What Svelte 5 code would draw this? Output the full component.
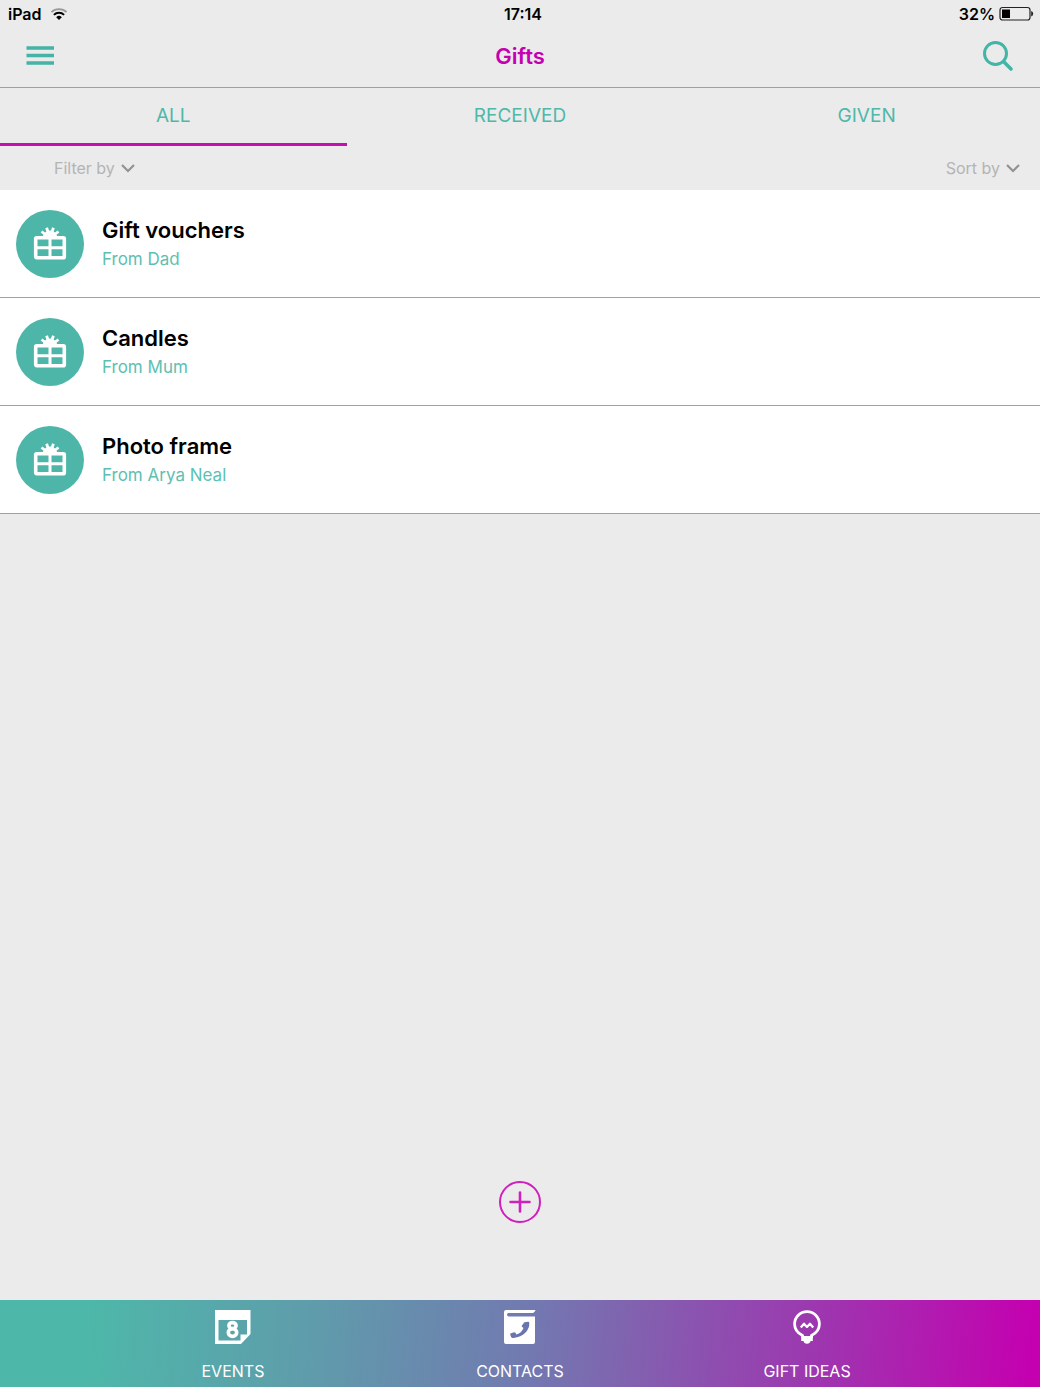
<script>
  const tabs = ['ALL', 'RECEIVED', 'GIVEN'];
  let active = $state('ALL');

  const gifts = [
    { name: 'Gift vouchers', from: 'From Dad' },
    { name: 'Candles', from: 'From Mum' },
    { name: 'Photo frame', from: 'From Arya Neal' }
  ];
</script>

{#snippet chevron()}
  <svg class="chevron" width="14" height="10" viewBox="0 0 14 10" aria-hidden="true">
    <path d="M1 2l6 6 6-6" fill="none" stroke="currentColor" stroke-width="2.2" />
  </svg>
{/snippet}

<div class="screen">
  <div class="status">
    <div class="device">
      <span>iPad</span>
      <svg width="18" height="14" viewBox="0 0 18 14" aria-hidden="true">
        <path d="M1.4 5.2a11 11 0 0 1 15.2 0" fill="none" stroke="#999" stroke-width="1.8" />
        <path d="M3.9 7.9a7.3 7.3 0 0 1 10.2 0" fill="none" stroke="#000" stroke-width="2" />
        <path d="M9 13l-2.8-2.8a4 4 0 0 1 5.6 0z" fill="#000" />
      </svg>
    </div>
    <span class="clock">17:14</span>
    <div class="battery">
      <span>32%</span>
      <svg width="35" height="16" viewBox="0 0 35 16" aria-hidden="true">
        <rect x="1" y="1.5" width="30" height="12.5" rx="2.5" fill="none" stroke="#222" stroke-width="1.2" />
        <rect x="3" y="3.5" width="8" height="8.5" fill="#000" />
        <path d="M32.2 5v5.500q2-.4 2-2.750t-2-2.750z" fill="#222" />
      </svg>
    </div>
  </div>

  <header>
    <button class="menu" aria-label="Menu">
      <svg width="28" height="20" viewBox="0 0 28 20" aria-hidden="true">
        <path d="M0.500 2H28M0.500 9.500H28M0.500 17H28" fill="none" stroke="#43b4a5" stroke-width="3.6" />
      </svg>
    </button>
    <h1>Gifts</h1>
    <button class="search" aria-label="Search">
      <svg width="32" height="32" viewBox="0 0 32 32" aria-hidden="true">
        <circle cx="13.500" cy="13.500" r="11" fill="none" stroke="#43b4a5" stroke-width="3" />
        <path d="M21.500 21.500l7.500 7.500" fill="none" stroke="#43b4a5" stroke-width="3.6" stroke-linecap="round" />
      </svg>
    </button>
  </header>

  <nav class="tabs" aria-label="Gift lists">
    {#each tabs as tab}
      <button class:active={active === tab} onclick={() => (active = tab)}>{tab}</button>
    {/each}
  </nav>

  <div class="tools">
    <button>Filter by {@render chevron()}</button>
    <button>Sort by {@render chevron()}</button>
  </div>

  <ul>
    {#each gifts as gift}
      <li>
        <span class="badge">
          <svg width="34" height="34" viewBox="0 0 34 34" aria-hidden="true">
            <rect x="2.7" y="10.700" width="28.6" height="20" rx="1" fill="none" stroke="#fff" stroke-width="3.6" />
            <path d="M17 11v20M2 20.700h30" stroke="#fff" stroke-width="3" />
            <path d="M17 11L8.500 4.500M17 11L13.600 .8M17 11L20.400 .8M17 11l8.500-6.500" stroke="#fff" stroke-width="2.800" />
            <path d="M10 10a7 6.500 0 0 1 14 0z" fill="#fff" />
          </svg>
        </span>
        <div>
          <h2>{gift.name}</h2>
          <p>{gift.from}</p>
        </div>
      </li>
    {/each}
  </ul>

  <main>
    <button aria-label="Add gift">
      <svg width="44" height="44" viewBox="0 0 44 44" aria-hidden="true">
        <circle cx="22" cy="22" r="20" fill="none" stroke="#cf1fbd" stroke-width="2" />
        <path d="M22 12.500v19M12.500 22h19" fill="none" stroke="#cf1fbd" stroke-width="2.6" stroke-linecap="round" />
      </svg>
    </button>
  </main>

  <nav class="bottom" aria-label="Sections">
    <a href="#events">
      <svg width="36" height="36" viewBox="0 0 36 36" aria-hidden="true">
        <path fill="#fff" fill-rule="evenodd" d="M0 1h35.500v24l-9.500 10H0zM3.500 11v20.500h22V25.500H32V11z" />
        <g fill="none" stroke="#fff" stroke-width="3.600">
          <ellipse cx="17.500" cy="16.600" rx="3.600" ry="3" />
          <ellipse cx="17.500" cy="23.600" rx="4.200" ry="3.800" />
        </g>
      </svg>
      <span>EVENTS</span>
    </a>
    <a href="#contacts">
      <svg width="36" height="36" viewBox="0 0 36 36" aria-hidden="true">
        <path fill="#fff" fill-rule="evenodd" d="M4 1h29.500q-.5 2-2.500 3H6.500q-1.500 0-1.500 1.500T6.500 7.500H33V33q0 2-2 2H4q-2 0-2-2V3q0-2 2-2z" />
        <path fill="#6a75ae" d="M21.500 14.500q0-1 1-1.200l3.500-.5q1.200 0 1.300 1.200.3 5.500-4 9.700T11.500 29q-2 .2-2.400-1L8.200 25.500q-.2-1 .8-1.300l3.200-1q1 0 1.500 1l.8 1.400q5-1.500 7-6.600l-1.300-1q-.8-.6-.3-1.500z" />
      </svg>
      <span>CONTACTS</span>
    </a>
    <a href="#ideas">
      <svg width="36" height="36" viewBox="0 0 36 36" aria-hidden="true">
        <path d="M13.500 29v-2.500C8.500 24 5.600 20.500 5.600 15a12.400 12.400 0 0 1 24.800 0c0 5.500-2.900 9-7.900 11.500V29" fill="none" stroke="#fff" stroke-width="2.800" />
        <path d="M12.200 27h11.600v5h-2.300q-.5 2.700-3.500 2.700T14.500 32h-2.300z" fill="#fff" />
        <path d="M11.800 18.500l3.200-3.800 3 3.200 3-3.200 3.200 3.800" fill="none" stroke="#fff" stroke-width="2.200" stroke-linejoin="round" />
      </svg>
      <span>GIFT IDEAS</span>
    </a>
  </nav>
</div>

<style>
  :global(body) {
    margin: 0;
    background: #ebebeb;
  }
  .screen {
    min-height: 100vh;
    display: flex;
    flex-direction: column;
    background: #ebebeb;
    color: #000;
    font-family: Inter, 'Liberation Sans', sans-serif;
  }
  button {
    padding: 0;
    border: 0;
    background: none;
    font: inherit;
    color: inherit;
    cursor: pointer;
  }
  svg {
    display: block;
    flex: none;
  }
  .status {
    display: grid;
    grid-template-columns: 1fr auto 1fr;
    align-items: center;
    height: 28px;
    padding: 0 6px 0 8px;
    font-size: 16px;
    font-weight: 600;
  }
  .clock {
    padding-left: 4px;
  }
  .device,
  .battery {
    display: flex;
    align-items: center;
    gap: 8px;
  }
  .battery {
    justify-content: flex-end;
    gap: 4px;
  }
  header {
    display: grid;
    grid-template-columns: 1fr auto 1fr;
    align-items: center;
    height: 56px;
    padding: 0 26px 3px;
    border-bottom: 1px solid #a0a0a0;
  }
  .menu {
    justify-self: start;
  }
  .search {
    justify-self: end;
  }
  h1,
  h2,
  p,
  ul {
    margin: 0;
    padding: 0;
  }
  h1 {
    font-size: 22px;
    line-height: 28px;
    font-weight: 600;
    color: #c400b0;
  }
  .tabs {
    display: grid;
    grid-template-columns: repeat(3, 1fr);
  }
  .tabs button {
    height: 58px;
    border-bottom: 3px solid transparent;
    font-size: 19px;
    color: #4fb8a9;
  }
  .tabs .active {
    border-bottom-color: #c30fb0;
  }
  .tools {
    display: flex;
    justify-content: space-between;
    height: 44px;
    padding: 0 20px 0 54px;
  }
  .tools button {
    display: flex;
    align-items: center;
    gap: 6px;
    font-size: 16px;
    color: #b4b4b4;
  }
  .chevron {
    color: #929292;
  }
  ul {
    list-style: none;
  }
  li {
    display: flex;
    align-items: center;
    gap: 18px;
    height: 107px;
    padding: 0 16px;
    background: #fff;
    border-bottom: 1px solid #5fc0b2;
  }
  .badge {
    display: grid;
    place-items: center;
    width: 68px;
    height: 68px;
    border-radius: 50%;
    background: #4db6a8;
  }
  h2 {
    font-size: 22px;
    line-height: 30px;
    font-weight: 600;
  }
  p {
    font-size: 17px;
    line-height: 28px;
    color: #5dc0b2;
  }
  main {
    flex: 1;
    display: flex;
    align-items: flex-end;
    justify-content: center;
    padding-bottom: 76px;
  }
  .bottom {
    display: grid;
    grid-template-columns: repeat(3, 1fr);
    height: 87px;
    padding: 0 8.6%;
    background: linear-gradient(95deg, #4db8a9 8%, #5f9cab 30%, #7279b0 51%, #9b3aaf 77%, #c400b0 99%);
  }
  .bottom a {
    display: flex;
    flex-direction: column;
    align-items: center;
    gap: 16px;
    padding-top: 9px;
    font-size: 16px;
    line-height: 20px;
    color: #fff;
    text-decoration: none;
  }
</style>
